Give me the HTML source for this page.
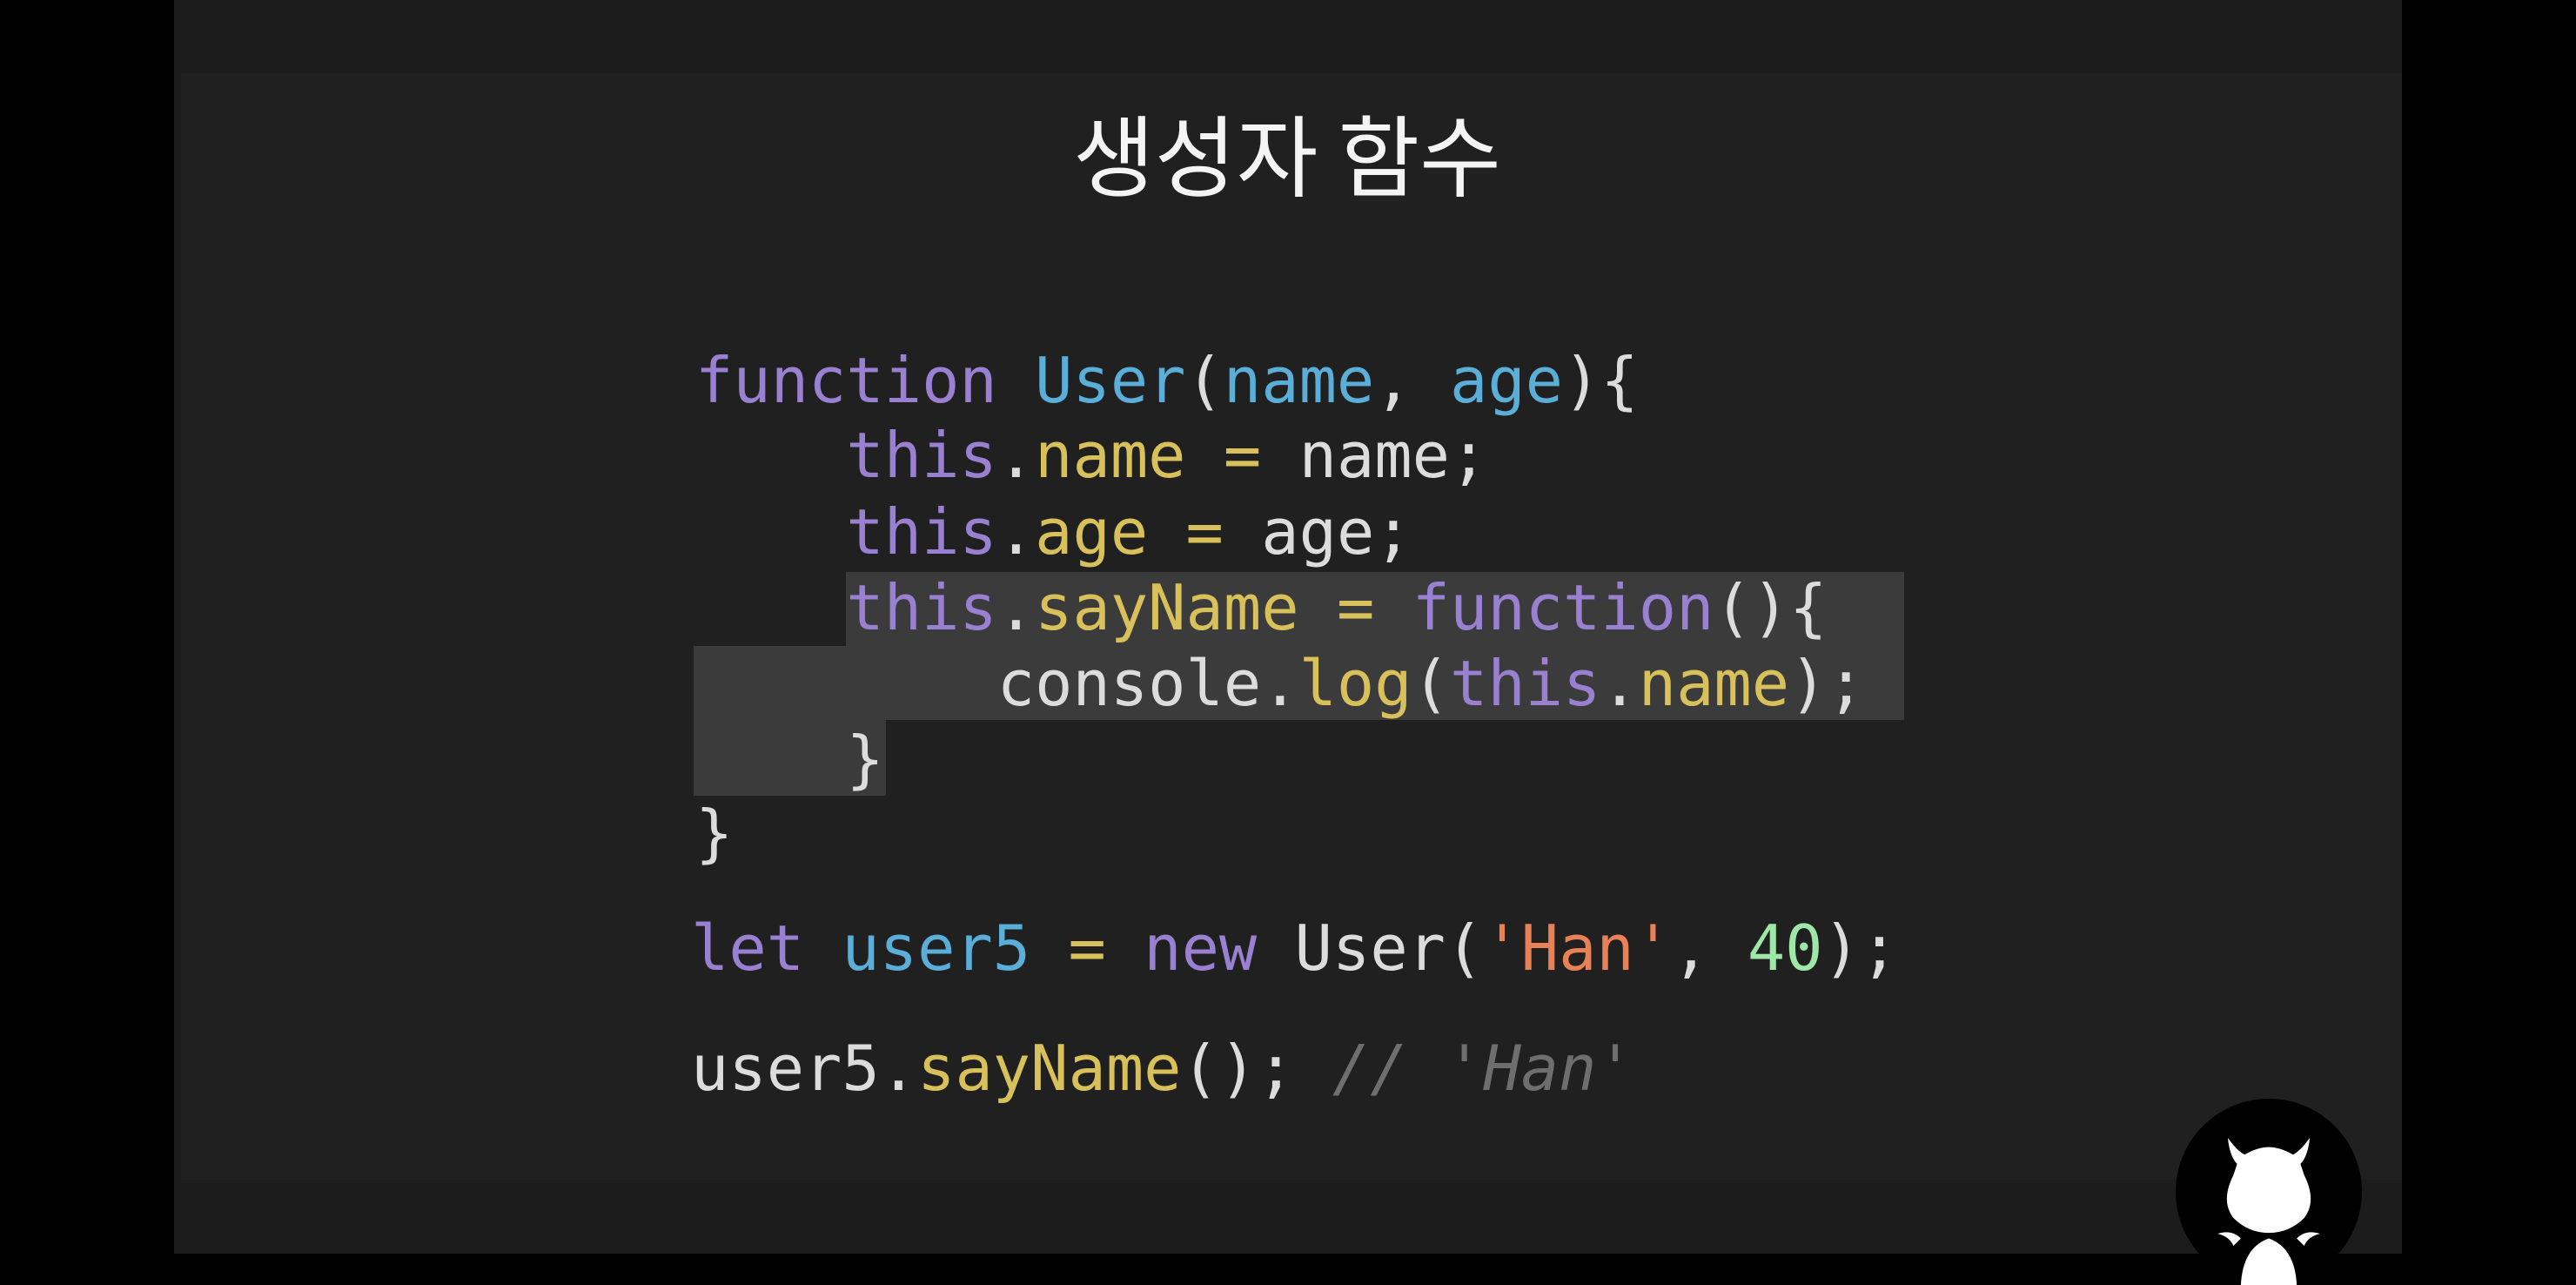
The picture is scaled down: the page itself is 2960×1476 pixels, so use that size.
<!DOCTYPE html>
<html><head><meta charset="utf-8"><style>
html,body{margin:0;padding:0}
body{width:2960px;height:1440px;background:#000;position:relative;overflow:hidden}
.bg{position:absolute;left:200px;top:0;width:2560px;height:1440px;background:#1c1c1c}
.slide{position:absolute;left:208px;top:84px;width:2552px;height:1271px;background:#202020}
.title{position:absolute;left:1079px;width:800px;top:110px;text-align:center;font-family:"Noto Sans CJK KR","Liberation Sans",sans-serif;font-size:102px;line-height:130px;color:#f4f4f4}
.hl{position:absolute;background:#3b3b3b}
.l{position:absolute;left:799px;font-family:"DejaVu Sans Mono","Liberation Mono",monospace;font-size:72px;line-height:86px;white-space:pre;color:#dcdcdc}
.p{color:#9a80d0}.b{color:#5aaed8}.y{color:#d8c05a}.w{color:#e2e2e2}.o{color:#e88155}.g{color:#9ee7a8}.c{color:#6e6e6e;font-style:italic}
</style></head><body>
<div class="bg"></div><div class="slide"></div>
<div class="title">생성자 함수</div>
<div class="hl" style="left:972px;top:657px;width:1216px;height:85px"></div>
<div class="hl" style="left:797px;top:742px;width:1391px;height:85px"></div>
<div class="hl" style="left:797px;top:827px;width:221px;height:87px"></div>
<div class="l" style="top:394px"><span class="p">function</span> <span class="b">User</span>(<span class="b">name</span>, <span class="b">age</span>){</div>
<div class="l" style="top:480px">    <span class="p">this</span>.<span class="y">name</span> <span class="y">=</span> name;</div>
<div class="l" style="top:568px">    <span class="p">this</span>.<span class="y">age</span> <span class="y">=</span> age;</div>
<div class="l" style="top:655px">    <span class="p">this</span>.<span class="y">sayName</span> <span class="y">=</span> <span class="p">function</span>(){</div>
<div class="l" style="top:742px">        console.<span class="y">log</span>(<span class="p">this</span>.<span class="y">name</span>);</div>
<div class="l" style="top:829px">    }</div>
<div class="l" style="top:914px">}</div>
<div class="l" style="top:1046px;left:794px"><span class="p">let</span> <span class="b">user5</span> <span class="y">=</span> <span class="p">new</span> User(<span class="o">'Han'</span>, <span class="g">40</span>);</div>
<div class="l" style="top:1184px;left:794px">user5.<span class="y">sayName</span>(); <span class="c">// 'Han'</span></div>
<svg style="position:absolute;left:2500px;top:1262px" width="214" height="214" viewBox="0 0 200 200">
<circle cx="100" cy="100" r="100" fill="#000"/>
<path d="M56 42 Q58 62 66 70 L62 82 Q48 110 62 128 Q78 144 100 144 Q122 144 138 128 Q152 110 138 82 L134 70 Q142 62 144 42 Q134 56 126 60 Q112 52 100 52 Q88 52 74 60 Q66 56 56 42 Z" fill="#fff"/>
<path d="M70 150 Q60 140 45 145 Q58 148 62 158 Z M130 150 Q140 140 155 145 Q142 148 138 158 Z" fill="#fff"/>
<path d="M70 200 Q72 160 100 150 Q128 160 130 200 Z" fill="#fff"/>
</svg>
</body></html>
